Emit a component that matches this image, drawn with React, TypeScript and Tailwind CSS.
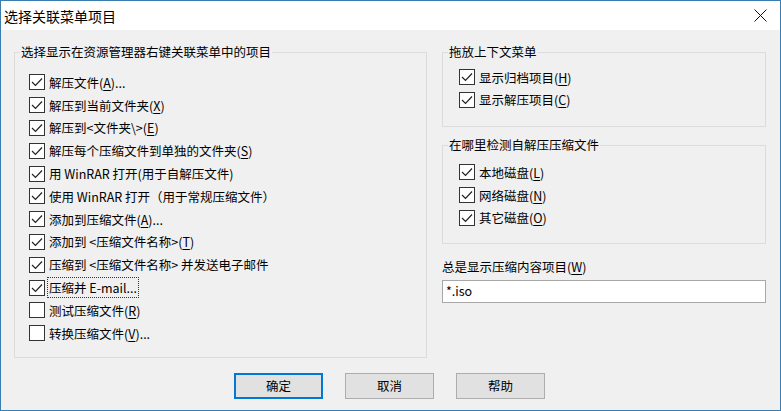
import React from "react";

const font = "font-['Noto_Sans_CJK_SC','Noto_Sans',sans-serif]";

function Key({ k }: { k: string }) {
  return <span className="underline underline-offset-2">{k}</span>;
}

function CheckBox({ checked }: { checked: boolean }) {
  return (
    <span className="w-[16px] h-[16px] shrink-0 border border-[#333333] bg-white flex items-center justify-center">
      {checked && (
        <svg width="14" height="14" viewBox="0 0 14 14">
          <path d="M2 7 L5.5 10.5 L12 3.5" fill="none" stroke="#222" strokeWidth="1.2" />
        </svg>
      )}
    </span>
  );
}

function Row({
  checked,
  children,
  focus,
  h = "h-[22.8px]",
}: {
  checked: boolean;
  children: React.ReactNode;
  focus?: boolean;
  h?: string;
}) {
  return (
    <div className={`flex items-center gap-[2px] ${h}`}>
      <CheckBox checked={checked} />
      <span
        className={
          focus
            ? "border border-dotted border-[#333] px-[1px] leading-[19px]"
            : "leading-[19px] px-[2px]"
        }
      >
        {children}
      </span>
    </div>
  );
}

function GroupBox({
  title,
  className,
  children,
}: {
  title: string;
  className: string;
  children: React.ReactNode;
}) {
  return (
    <div className={`relative border border-[#dcdcdc] ${className}`}>
      <span className="absolute -top-[10px] left-[5px] bg-[#f0f0f0] px-[1px] leading-[18px]">
        {title}
      </span>
      {children}
    </div>
  );
}

function Button({ label, primary }: { label: string; primary?: boolean }) {
  return (
    <button
      className={`w-[89px] h-[26px] bg-[#e1e1e1] flex items-center justify-center ${
        primary ? "border-2 border-[#0078d7]" : "border border-[#adadad]"
      }`}
    >
      {label}
    </button>
  );
}

export default function App() {
  const left: { c: boolean; t: React.ReactNode; focus?: boolean }[] = [
    { c: true, t: <>解压文件(<Key k="A" />)...</> },
    { c: true, t: <>解压到当前文件夹(<Key k="X" />)</> },
    { c: true, t: <>解压到&lt;文件夹\&gt;(<Key k="E" />)</> },
    { c: true, t: <>解压每个压缩文件到单独的文件夹(<Key k="S" />)</> },
    { c: true, t: <>用 WinRAR 打开(用于自解压文件)</> },
    { c: true, t: <>使用 WinRAR 打开（用于常规压缩文件）</> },
    { c: true, t: <>添加到压缩文件(<Key k="A" />)...</> },
    { c: true, t: <>添加到 &lt;压缩文件名称&gt;(<Key k="T" />)</> },
    { c: true, t: <>压缩到 &lt;压缩文件名称&gt; 并发送电子邮件</> },
    { c: true, t: <>压缩并 E-mail...</>, focus: true },
    { c: false, t: <>测试压缩文件(<Key k="R" />)</> },
    { c: false, t: <>转换压缩文件(<Key k="V" />)...</> },
  ];

  return (
    <div
      className={`w-[781px] h-[411px] border border-[#3a7db0] flex flex-col text-[12.5px] text-black ${font}`}
    >
      <div className="h-[29px] bg-white flex items-center justify-between pl-[3px] pr-[13px]">
        <span className="text-[14px] leading-none pt-[1px]">选择关联菜单项目</span>
        <svg width="13" height="13" viewBox="0 0 13 13">
          <path d="M0.5 0.5 L12.5 12.5 M12.5 0.5 L0.5 12.5" stroke="#111" strokeWidth="1" />
        </svg>
      </div>

      <div className="flex-1 bg-[#f0f0f0] flex flex-col">
        <div className="flex pl-[13px] pt-[22px] gap-[15px]">
          <GroupBox
            title="选择显示在资源管理器右键关联菜单中的项目"
            className="w-[413px] h-[306px] pl-[14px] pt-[18px]"
          >
            {left.map((r, i) => (
              <Row key={i} checked={r.c} focus={r.focus}>
                {r.t}
              </Row>
            ))}
          </GroupBox>

          <div className="w-[324px] flex flex-col">
            <GroupBox title="拖放上下文菜单" className="h-[75px] pl-[16px] pt-[13px]">
              <Row checked h="h-[22.5px]">
                显示归档项目(<Key k="H" />)
              </Row>
              <Row checked h="h-[22.5px]">
                显示解压项目(<Key k="C" />)
              </Row>
            </GroupBox>

            <GroupBox
              title="在哪里检测自解压压缩文件"
              className="h-[99px] mt-[18px] pl-[16px] pt-[15px]"
            >
              <Row checked>
                本地磁盘(<Key k="L" />)
              </Row>
              <Row checked>
                网络磁盘(<Key k="N" />)
              </Row>
              <Row checked>
                其它磁盘(<Key k="O" />)
              </Row>
            </GroupBox>

            <div className="mt-[13px] leading-[19px]">
              总是显示压缩内容项目(<Key k="W" />)
            </div>
            <div className="mt-[4px] h-[23px] bg-white border border-[#a8a8a8] flex items-center px-[3px]">
              *.iso
            </div>
          </div>
        </div>

        <div className="flex justify-center gap-[22px] mt-[15px] pr-[2px]">
          <Button label="确定" primary />
          <Button label="取消" />
          <Button label="帮助" />
        </div>
      </div>
    </div>
  );
}
